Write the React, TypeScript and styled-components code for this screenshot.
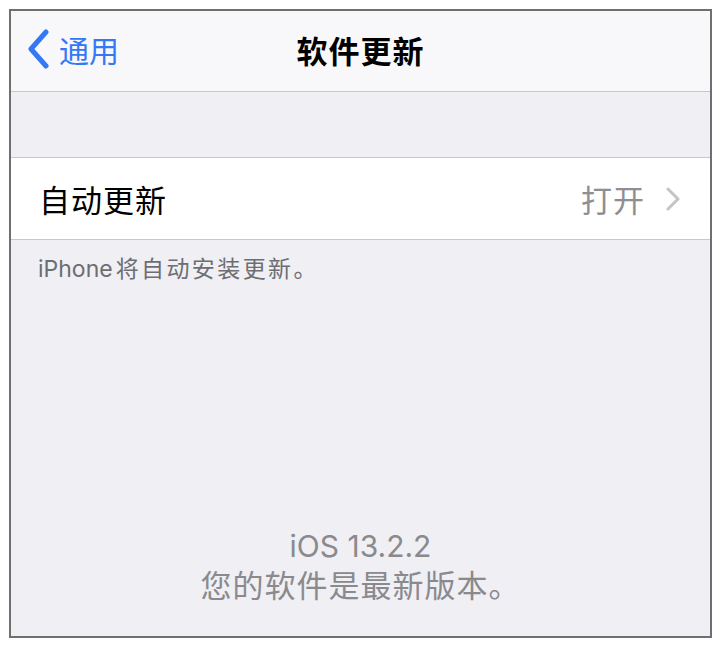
import React from "react";
import styled, { createGlobalStyle } from "styled-components";

const Global = createGlobalStyle`
  html, body { margin: 0; padding: 0; background: #ffffff; }
  body { font-family: "Inter", "Noto Sans CJK SC", sans-serif; }
`;

const Page = styled.div`
  padding: 9px 0 0 9px;
`;

const Frame = styled.div`
  width: 699px;
  height: 625px;
  border: 2px solid #6f6f6f;
  background: #efeff4;
  display: flex;
  flex-direction: column;
  overflow: hidden;
`;

const NavBar = styled.div`
  height: 81px;
  padding-bottom: 4px;
  box-sizing: border-box;
  background: #f8f8fa;
  border-bottom: 1px solid #c8c7cc;
  display: grid;
  grid-template-columns: 1fr auto 1fr;
  align-items: center;
`;

const Back = styled.div`
  display: flex;
  align-items: center;
  gap: 9px;
  padding-left: 15px;
  color: #3478f6;
  font-size: 30px;
  font-family: "Noto Sans CJK SC", sans-serif;
  line-height: 1;
`;

const Title = styled.div`
  font-size: 31px;
  font-weight: 700;
  color: #000;
  letter-spacing: 1px;
  font-family: "Noto Sans CJK SC", sans-serif;
`;

const Gap = styled.div`
  height: 65px;
`;

const Row = styled.div`
  height: 81px;
  background: #ffffff;
  border-top: 1px solid #c8c7cc;
  border-bottom: 1px solid #c8c7cc;
  display: flex;
  align-items: center;
  padding: 0 30px 0 28px;
  font-family: "Noto Sans CJK SC", sans-serif;
`;

const Label = styled.div`
  flex: 1;
  font-size: 31px;
  letter-spacing: 1px;
  color: #000;
`;

const Value = styled.div`
  font-size: 31px;
  letter-spacing: 1px;
  color: #8e8e93;
  margin-right: 21px;
`;

const Footer = styled.div`
  padding: 14px 0 0 27px;
  font-size: 23px;
  line-height: 30px;
  color: #6d6d72;
  font-family: "Inter", "Noto Sans CJK SC", sans-serif;
`;

const Cjk = styled.span`
  font-size: 23px;
  letter-spacing: 2.4px;
  margin-left: 3px;
`;

const Status = styled.div`
  margin-top: auto;
  padding-bottom: 30px;
  text-align: center;
  color: #8a8a8e;
  font-family: "Inter", "Noto Sans CJK SC", sans-serif;
`;

const Version = styled.div`
  font-size: 30px;
  line-height: 40px;
`;

const Message = styled.div`
  font-size: 31px;
  line-height: 40px;
  letter-spacing: 1px;
`;

export default function App() {
  return (
    <Page>
      <Global />
      <Frame>
        <NavBar>
          <Back>
            <svg width="24" height="40" viewBox="0 0 24 40">
              <path d="M20 3 L5 20 L20 37" fill="none" stroke="#3478f6" strokeWidth="5" strokeLinecap="round" strokeLinejoin="round" />
            </svg>
            <span>通用</span>
          </Back>
          <Title>软件更新</Title>
          <div />
        </NavBar>
        <Gap />
        <Row>
          <Label>自动更新</Label>
          <Value>打开</Value>
          <svg width="14" height="24" viewBox="0 0 14 24">
            <path d="M2 2 L12 12 L2 22" fill="none" stroke="#c4c4c8" strokeWidth="3" strokeLinecap="round" strokeLinejoin="round" />
          </svg>
        </Row>
        <Footer>
          iPhone<Cjk>将自动安装更新。</Cjk>
        </Footer>
        <Status>
          <Version>iOS 13.2.2</Version>
          <Message>您的软件是最新版本。</Message>
        </Status>
      </Frame>
    </Page>
  );
}
